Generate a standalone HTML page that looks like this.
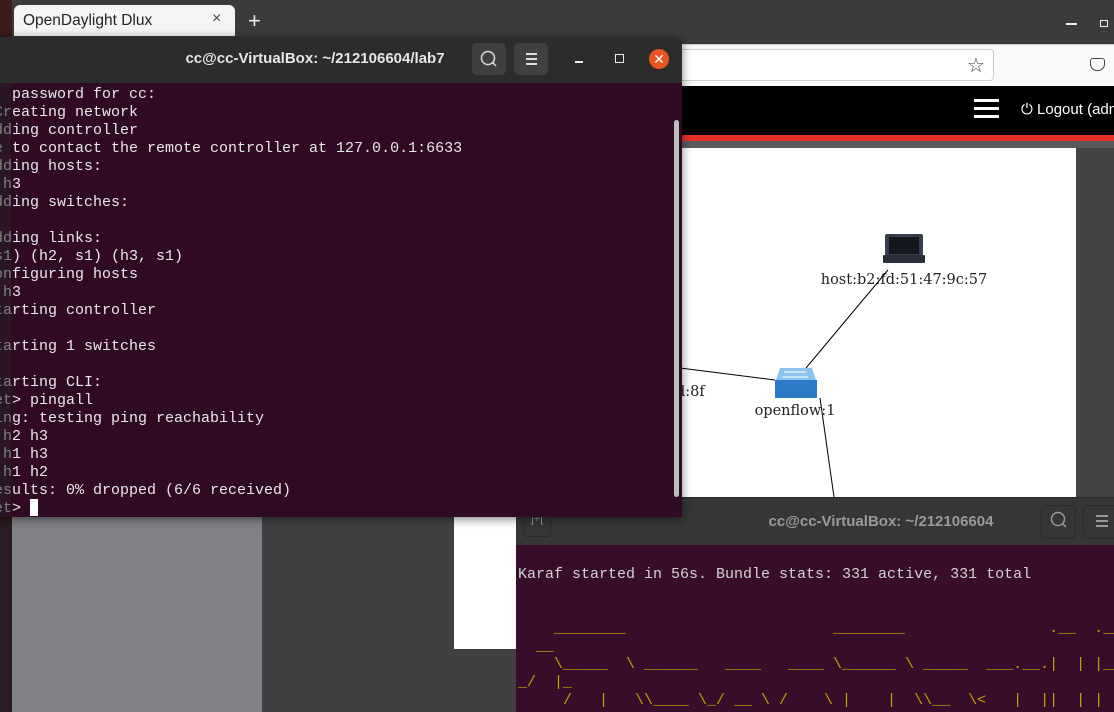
<!DOCTYPE html>
<html><head><meta charset="utf-8"><style>
*{margin:0;padding:0;box-sizing:border-box}
body{width:1114px;height:712px;overflow:hidden;position:relative;background:#3c3b39;font-family:"Liberation Sans",sans-serif}
.a{position:absolute}
.mono{font-family:"Liberation Mono",monospace;font-size:15px;line-height:18px;white-space:pre}
</style></head><body>
<div class="a" style="left:0;top:0;width:12px;height:712px;background:#2a1c22"></div>
<div class="a" style="left:0;top:0;width:12px;height:36px;background:#3b1b1b"></div>
<div class="a" style="left:14px;top:5px;width:221px;height:31px;background:#f5f5f5;border-radius:6px 6px 0 0"></div>
<div class="a" style="left:23px;top:12px;font-size:15.5px;color:#222">OpenDaylight Dlux</div>
<div class="a" style="left:212px;top:10px;font-size:16px;color:#444">×</div>
<div class="a" style="left:248px;top:8px;font-size:22px;color:#eee">+</div>
<div class="a" style="left:1066px;top:23px;width:11px;height:2px;background:#eee"></div>
<div class="a" style="left:1100px;top:20px;width:8px;height:7px;border:1.5px solid #eee"></div>
<div class="a" style="left:680px;top:44px;width:434px;height:42px;background:#f9f9fa;border-top:1px solid #ccc"></div>
<div class="a" style="left:660px;top:49px;width:334px;height:32px;background:#fff;border:1px solid #ccc;border-radius:4px"></div>
<div class="a" style="left:967px;top:53px;font-size:20px;color:#333">☆</div>
<div class="a" style="left:1090px;top:58px;width:15px;height:13px;border:1.5px solid #444;border-radius:3px 3px 7px 7px"></div>
<div class="a" style="left:680px;top:86px;width:434px;height:50px;background:#000"></div>
<div class="a" style="left:974px;top:99px;width:25px;height:3px;background:#fff;box-shadow:0 8px 0 #fff,0 16px 0 #fff"></div>
<div class="a" style="left:1021px;top:101px;font-size:15px;color:#fff;white-space:nowrap">⏻ Logout (admin)</div>
<div class="a" style="left:680px;top:135px;width:434px;height:6px;background:#e8302a"></div>
<div class="a" style="left:680px;top:141px;width:434px;height:7px;background:#5a5a5c"></div>
<div class="a" style="left:680px;top:148px;width:396px;height:349px;background:#fff"></div>
<div class="a" style="left:1076px;top:148px;width:38px;height:349px;background:#444"></div>
<svg class="a" style="left:680px;top:148px" width="396" height="349">
<line x1="0" y1="220" x2="95" y2="232" stroke="#000"/>
<line x1="126" y1="220" x2="208" y2="122" stroke="#000"/>
<line x1="140" y1="250" x2="154" y2="349" stroke="#000"/>
<rect x="205" y="86" width="38" height="22" rx="2" fill="#3a3d4c"/>
<rect x="209" y="89" width="30" height="17" fill="#15171f"/>
<rect x="203" y="107" width="42" height="8" rx="1" fill="#2a2d3a"/>
<polygon points="100,220 132,220 136,232 96,232" fill="#8cc4ee"/>
<rect x="95" y="232" width="42" height="18" fill="#2d7ac6"/>
<line x1="104" y1="224" x2="126" y2="224" stroke="#fff" stroke-width="1"/>
<line x1="102" y1="229" x2="128" y2="229" stroke="#fff" stroke-width="1"/>
<text x="224" y="136" font-family="DejaVu Serif" font-size="14.5" fill="#222" text-anchor="middle">host:b2:fd:51:47:9c:57</text>
<text x="115" y="267" font-family="DejaVu Serif" font-size="14.5" fill="#222" text-anchor="middle">openflow:1</text>
<text x="-4" y="248" font-family="DejaVu Serif" font-size="14.5" fill="#222">d:8f</text>
</svg>
<div class="a" style="left:12px;top:517px;width:250px;height:195px;background:#818286"></div>
<div class="a" style="left:262px;top:517px;width:254px;height:195px;background:#404042"></div>
<div class="a" style="left:454px;top:517px;width:62px;height:132px;background:#fff"></div>
<div class="a" style="left:516px;top:497px;width:598px;height:48px;background:#363636;border-top:1px solid #2a2a2a"></div>
<div class="a" style="left:523px;top:502px;width:28px;height:35px;border:1px solid #2a2a2a;border-radius:4px;color:#999;font-size:11px;text-align:center;line-height:33px">]+[</div>
<div class="a" style="left:716px;top:513px;width:330px;text-align:center;font-size:15px;font-weight:bold;color:#9a9a9a">cc@cc-VirtualBox: ~/212106604</div>
<div class="a" style="left:1041px;top:505px;width:35px;height:34px;border:1px solid #2a2a2a;border-radius:5px"></div>
<svg class="a" style="left:1049px;top:510px" width="20" height="22"><circle cx="9" cy="9" r="6.5" fill="none" stroke="#999" stroke-width="1.5"/><line x1="13.5" y1="13.5" x2="17" y2="17" stroke="#999" stroke-width="1.5"/></svg>
<div class="a" style="left:1083px;top:505px;width:40px;height:34px;border:1px solid #2a2a2a;border-radius:5px"></div>
<div class="a" style="left:1096px;top:515px;width:12px;height:1.5px;background:#999;box-shadow:0 5px 0 #999,0 10px 0 #999"></div>
<div class="a" style="left:516px;top:545px;width:598px;height:167px;background:#380c2b"></div>
<div class="a mono" style="left:518px;top:566px;color:#d3d3d3">Karaf started in 56s. Bundle stats: 331 active, 331 total</div>
<div class="a mono" style="left:518px;top:620px;color:#c4a000">    ________                       ________                .__  .__
  __
    \_____  \ ______   ____   ____ \______ \ _____  ___.__.|  | |__
_/  |_
     /   |   \\____ \_/ __ \ /    \ |    |  \\__  \&lt;   |  ||  | |  |</div>
<div class="a" style="left:-10px;top:37px;width:692px;height:480px;background:#300a24;border-radius:8px 8px 0 0;box-shadow:0 2px 10px rgba(0,0,0,.5)"></div>
<div class="a" style="left:-10px;top:37px;width:692px;height:46px;background:#2c2c2c;border-radius:8px 8px 0 0"></div>
<div class="a" style="left:150px;top:50px;width:330px;text-align:center;font-size:15px;font-weight:bold;color:#e6e6e6">cc@cc-VirtualBox: ~/212106604/lab7</div>
<div class="a" style="left:472px;top:43px;width:34px;height:32px;background:#404040;border-radius:5px"></div>
<svg class="a" style="left:479px;top:49px" width="20" height="22"><circle cx="9" cy="9" r="6.5" fill="none" stroke="#ddd" stroke-width="1.5"/><line x1="13.5" y1="13.5" x2="17" y2="17" stroke="#ddd" stroke-width="1.5"/></svg>
<div class="a" style="left:514px;top:43px;width:34px;height:32px;background:#404040;border-radius:5px"></div>
<div class="a" style="left:526px;top:53px;width:11px;height:1.5px;background:#ddd;box-shadow:0 5px 0 #ddd,0 10px 0 #ddd"></div>
<div class="a" style="left:575px;top:61px;width:8px;height:1.5px;background:#eee"></div>
<div class="a" style="left:615px;top:54px;width:9px;height:9px;border:1.5px solid #eee"></div>
<div class="a" style="left:649px;top:49px;width:20px;height:20px;background:#e95420;border-radius:50%;color:#fff;font-size:14px;text-align:center;line-height:20px">✕</div>
<div class="a" style="left:674px;top:120px;width:5px;height:377px;background:#bdbdbd;border-radius:3px"></div>
<div class="a mono" style="left:-6px;top:86px;color:#e8e8e8">] password for cc:
Creating network
dding controller
e to contact the remote controller at 127.0.0.1:6633
dding hosts:
 h3
dding switches:

dding links:
s1) (h2, s1) (h3, s1)
onfiguring hosts
 h3
tarting controller

tarting 1 switches

tarting CLI:
et&gt; pingall
ing: testing ping reachability
 h2 h3
 h1 h3
 h1 h2
esults: 0% dropped (6/6 received)
et&gt;</div>
<div class="a" style="left:30px;top:499px;width:8px;height:17px;background:#fff"></div>
<div class="a" style="left:0;top:83px;width:11px;height:434px;background:rgba(40,32,38,.55)"></div>
</body></html>
